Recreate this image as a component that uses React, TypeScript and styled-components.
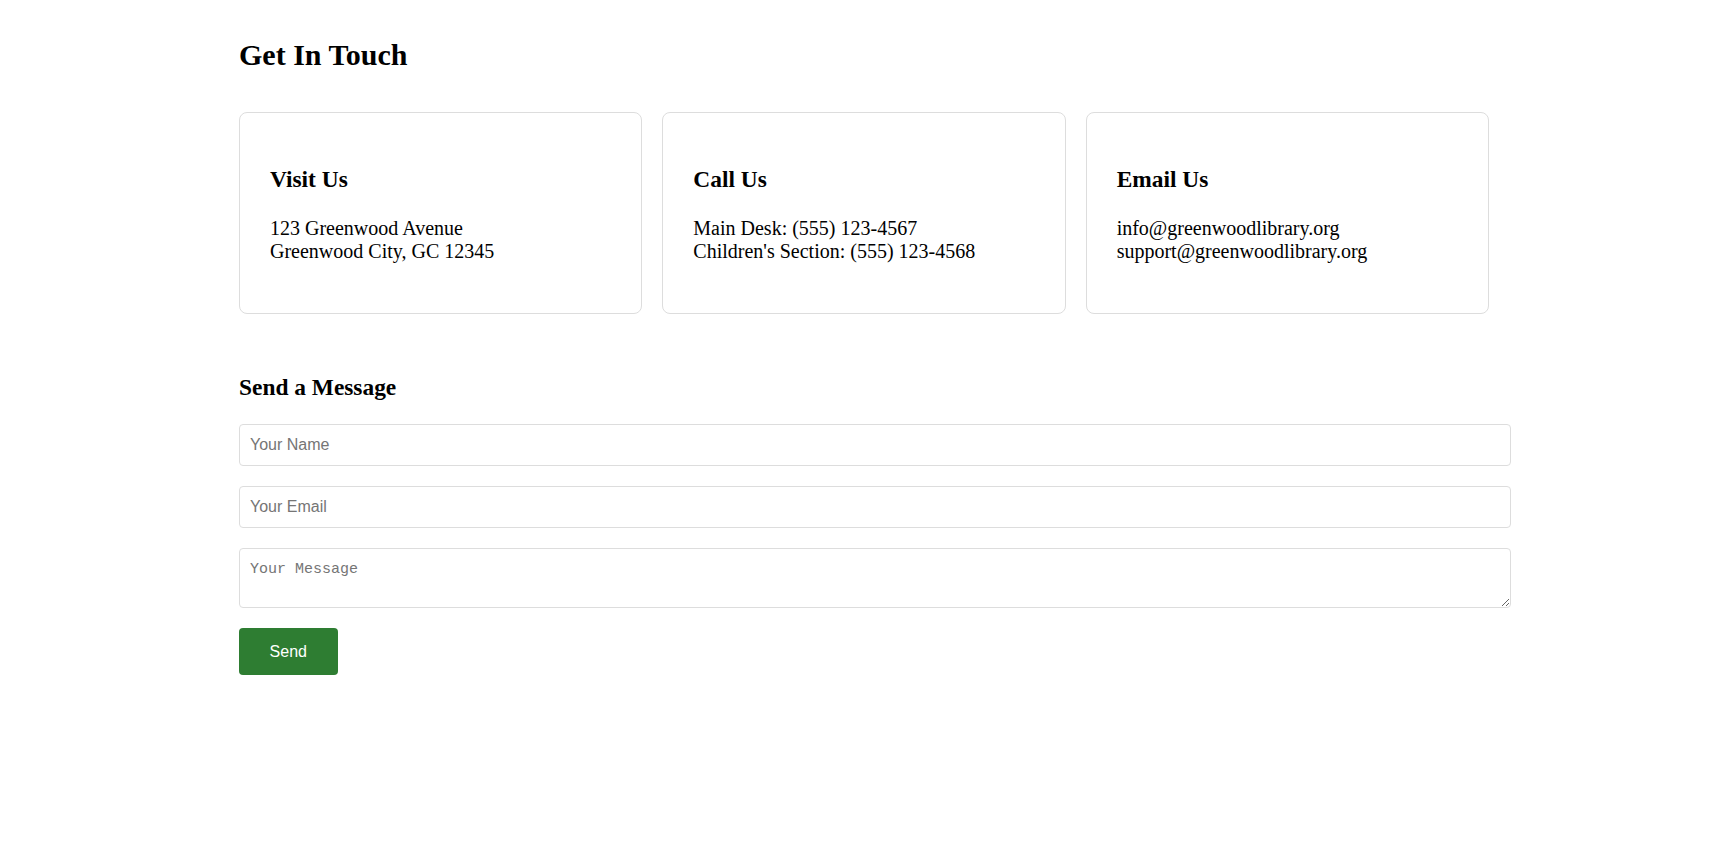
import React from "react";
import styled, { createGlobalStyle } from "styled-components";

const GlobalStyle = createGlobalStyle`
  body {
    margin: 8px;
    background: #ffffff;
    color: #000000;
    font-family: "Liberation Serif", "Times New Roman", serif;
    font-size: 20px;
  }
`;

const Page = styled.section`
  max-width: 1250px;
  margin: 0 auto;
  padding-top: 30px;
`;

const Title = styled.h2`
  font-size: 1.5em;
  font-weight: bold;
  margin: 0 0 40px;
`;

const CardGrid = styled.div`
  display: grid;
  grid-template-columns: repeat(3, 1fr);
  gap: 20px;
  margin-bottom: 60px;
`;

const Card = styled.div`
  border: 1px solid #dddddd;
  border-radius: 8px;
  padding: 30px;
  background: #ffffff;
`;

const CardTitle = styled.h3`
  font-size: 1.17em;
  margin: 1em 0;
`;

const CardText = styled.p`
  margin: 1em 0;
`;

const SectionTitle = styled.h3`
  font-size: 1.17em;
  margin: 1em 0;
`;

const Form = styled.form`
  display: flex;
  flex-direction: column;
  align-items: flex-start;
  gap: 20.6px;
`;

const TextInput = styled.input`
  display: block;
  width: 100%;
  height: 19.4px;
  padding: 10px;
  border: 1px solid #dddddd;
  border-radius: 4px;
  font-family: "Liberation Sans", Arial, sans-serif;
  font-size: 16px;
  color: #000;
  outline: none;
  &::placeholder {
    color: #757575;
  }
`;

const MessageArea = styled.textarea`
  display: block;
  width: 100%;
  padding: 12px 10px 8px;
  border: 1px solid #dddddd;
  border-radius: 4px;
  font-family: "Liberation Mono", "DejaVu Sans Mono", monospace;
  font-size: 15px;
  line-height: 18.7px;
  color: #000;
  outline: none;
  &::placeholder {
    color: #757575;
  }
`;

const SendButton = styled.button`
  background: #2e7d32;
  color: #ffffff;
  border: none;
  border-radius: 4px;
  padding: 14.5px 30.6px;
  font-family: "Liberation Sans", Arial, sans-serif;
  font-size: 16px;
  cursor: pointer;
`;

const cards = [
  { title: "Visit Us", lines: ["123 Greenwood Avenue", "Greenwood City, GC 12345"] },
  { title: "Call Us", lines: ["Main Desk: (555) 123-4567", "Children's Section: (555) 123-4568"] },
  { title: "Email Us", lines: ["info@greenwoodlibrary.org", "support@greenwoodlibrary.org"] },
];

export default function App() {
  return (
    <>
      <GlobalStyle />
      <Page>
        <Title>Get In Touch</Title>
        <CardGrid>
          {cards.map((c) => (
            <Card key={c.title}>
              <CardTitle>{c.title}</CardTitle>
              <CardText>
                {c.lines[0]}
                <br />
                {c.lines[1]}
              </CardText>
            </Card>
          ))}
        </CardGrid>
        <SectionTitle>Send a Message</SectionTitle>
        <Form onSubmit={(e) => e.preventDefault()}>
          <TextInput type="text" placeholder="Your Name" />
          <TextInput type="email" placeholder="Your Email" />
          <MessageArea rows={2} placeholder="Your Message" />
          <SendButton type="submit">Send</SendButton>
        </Form>
      </Page>
    </>
  );
}
